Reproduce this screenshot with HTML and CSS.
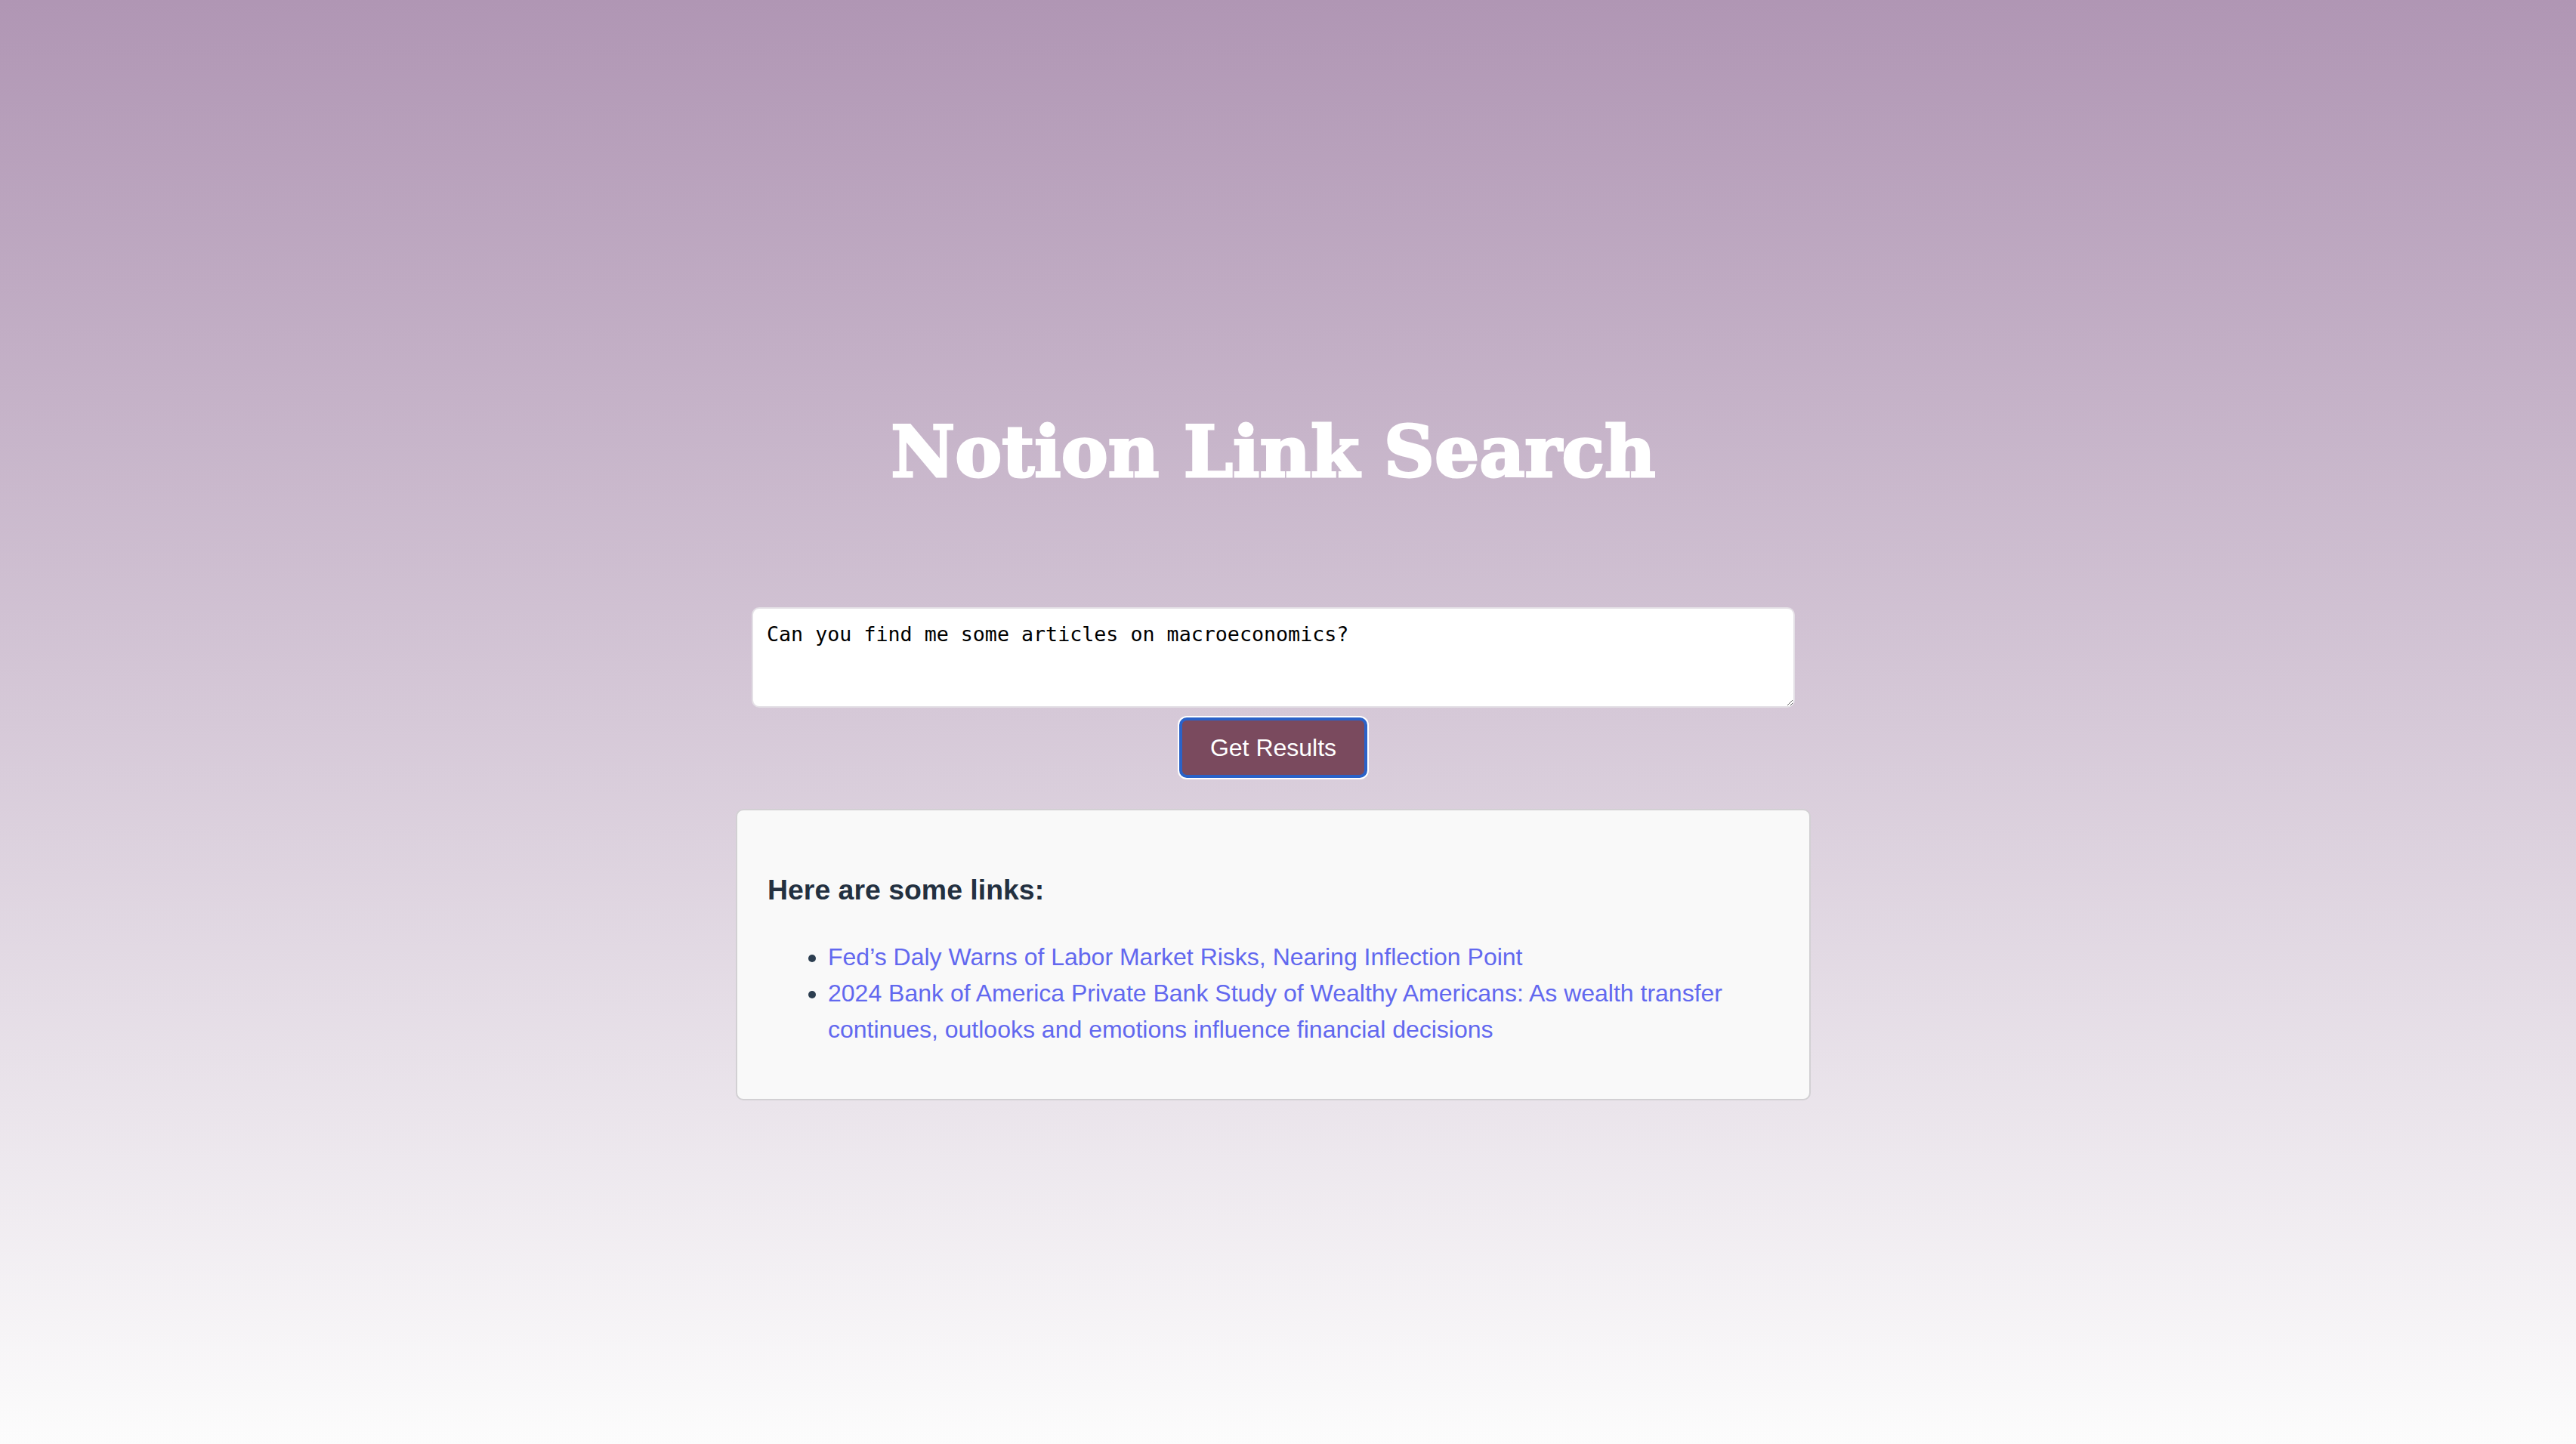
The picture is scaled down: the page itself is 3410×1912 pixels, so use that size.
FILE: index.html
```html
<!DOCTYPE html>
<html lang="en">
<head>
<meta charset="utf-8">
<title>Notion Link Search</title>
<link rel="stylesheet" href="styles.css">
</head>
<body>
<main class="page">
  <h1 class="title">Notion Link Search</h1>
  <form class="search">
    <textarea class="query">Can you find me some articles on macroeconomics?</textarea>
    <button type="button" class="submit">Get Results</button>
  </form>
  <section class="results">
    <h3 class="results-heading">Here are some links:</h3>
    <ul class="links">
      <li><a href="#">Fed’s Daly Warns of Labor Market Risks, Nearing Inflection Point</a></li>
      <li><a href="#">2024 Bank of America Private Bank Study of Wealthy Americans: As wealth transfer continues, outlooks and emotions influence financial decisions</a></li>
    </ul>
  </section>
</main>
</body>
</html>
```

FILE: styles.css
```css
html, body {
  margin: 0;
  padding: 0;
}
body {
  min-height: 100vh;
  background: linear-gradient(to bottom, #b096b4 0%, #fcfcfc 100%);
  font-family: "Liberation Sans", Arial, Helvetica, sans-serif;
  line-height: 1.5;
}
.page {
  display: flex;
  flex-direction: column;
  align-items: center;
  padding: 552px 39px 0 0;
}
.title {
  margin: 0;
  font-family: "DejaVu Serif", "Liberation Serif", serif;
  font-weight: bold;
  font-size: 93px;
  letter-spacing: 0;
  line-height: 1;
  height: 93px;
  color: #ffffff;
  -webkit-text-stroke: 3px #ffffff;
}
.search {
  margin-top: 159px;
  display: flex;
  flex-direction: column;
  align-items: center;
}
.query {
  box-sizing: border-box;
  width: 1381px;
  height: 133px;
  padding: 18px;
  border: 2px solid #e4e0e6;
  border-radius: 10px;
  background: #ffffff;
  color: #000;
  font-family: "DejaVu Sans Mono", monospace;
  font-size: 26.67px;
  line-height: 1.164;
}
.submit {
  box-sizing: border-box;
  margin-top: 13px;
  width: 249px;
  height: 80px;
  padding: 0;
  border: 4px solid #2a62c8;
  border-radius: 10px;
  box-shadow: 0 0 0 2px #ffffff;
  background: #7a4a5e;
  color: #ffffff;
  font-family: "Liberation Sans", Arial, sans-serif;
  font-size: 32px;
}
.results {
  box-sizing: border-box;
  margin-top: 41px;
  width: 1423px;
  padding: 40px;
  border: 2px solid #d2d0d3;
  border-radius: 10px;
  background: #f9f9f9;
  font-size: 32px;
  color: #2c3e50;
  display: flow-root;
}
.results-heading {
  margin: 37px 0;
  font-size: 37.44px;
  color: #233040;
}
.links {
  margin: 32px 0 28px;
  padding-left: 80px;
}
.links a {
  color: #6268ef;
  text-decoration: none;
}
```
